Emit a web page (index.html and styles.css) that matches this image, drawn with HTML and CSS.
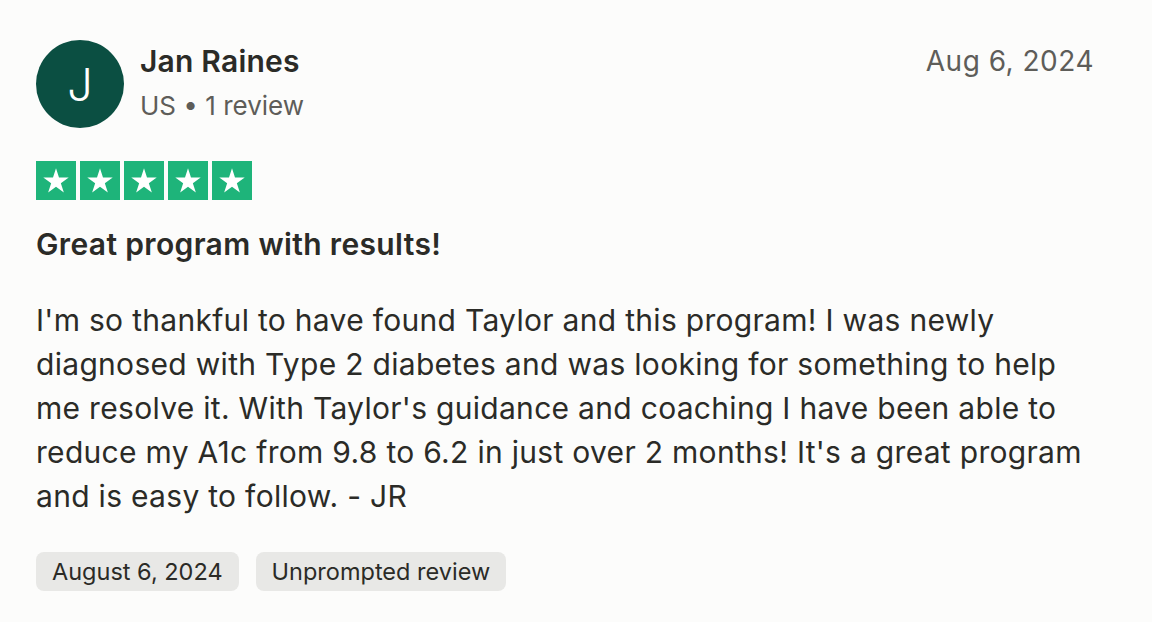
FILE: index.html
```html
<!DOCTYPE html>
<html lang="en">
<head>
<meta charset="utf-8">
<title>Review</title>
<link rel="stylesheet" href="styles.css">
</head>
<body>
<article class="review">
  <header class="review-head">
    <div class="consumer">
      <div class="avatar">J</div>
      <div class="consumer-info">
        <div class="name">Jan Raines</div>
        <div class="meta">US • 1 review</div>
      </div>
    </div>
    <time class="date">Aug 6, 2024</time>
  </header>
  <div class="stars" aria-label="Rated 5 out of 5">
    <span class="star"><svg viewBox="0 0 40 40"><path d="M20 7.5L23.07 16.97H33.03L24.97 22.82L28.05 32.28L20 26.43L11.95 32.28L15.03 22.82L6.97 16.97H16.93Z"/></svg></span>
    <span class="star"><svg viewBox="0 0 40 40"><path d="M20 7.5L23.07 16.97H33.03L24.97 22.82L28.05 32.28L20 26.43L11.95 32.28L15.03 22.82L6.97 16.97H16.93Z"/></svg></span>
    <span class="star"><svg viewBox="0 0 40 40"><path d="M20 7.5L23.07 16.97H33.03L24.97 22.82L28.05 32.28L20 26.43L11.95 32.28L15.03 22.82L6.97 16.97H16.93Z"/></svg></span>
    <span class="star"><svg viewBox="0 0 40 40"><path d="M20 7.5L23.07 16.97H33.03L24.97 22.82L28.05 32.28L20 26.43L11.95 32.28L15.03 22.82L6.97 16.97H16.93Z"/></svg></span>
    <span class="star"><svg viewBox="0 0 40 40"><path d="M20 7.5L23.07 16.97H33.03L24.97 22.82L28.05 32.28L20 26.43L11.95 32.28L15.03 22.82L6.97 16.97H16.93Z"/></svg></span>
  </div>
  <h2 class="title">Great program with results!</h2>
  <p class="text">I'm so thankful to have found Taylor and this program! I was newly diagnosed with Type 2 diabetes and was looking for something to help me resolve it. With Taylor's guidance and coaching I have been able to reduce my A1c from 9.8 to 6.2 in just over 2 months! It's a great program and is easy to follow. - JR</p>
  <div class="tags">
    <span class="tag">August 6, 2024</span>
    <span class="tag">Unprompted review</span>
  </div>
</article>
</body>
</html>
```
FILE: styles.css
```css
html, body {
  margin: 0;
  padding: 0;
  background: #fcfcfb;
}
body {
  font-family: Inter, "Noto Sans", sans-serif;
  color: #2b2b27;
}
.review {
  padding: 40px 58px 0 36px;
}
.review-head {
  display: flex;
  justify-content: space-between;
  align-items: flex-start;
}
.consumer {
  display: flex;
  align-items: center;
  gap: 16px;
}
.avatar {
  width: 88px;
  height: 88px;
  border-radius: 50%;
  background: #0b4f42;
  color: #fff;
  display: flex;
  align-items: center;
  justify-content: center;
  font-size: 45px;
  font-weight: 300;
  line-height: 1;
}
.consumer-info {
  display: flex;
  flex-direction: column;
  gap: 9px;
  margin-top: -4px;
}
.name {
  font-size: 30px;
  font-weight: 600;
  line-height: 38px;
  letter-spacing: 0.2px;
}
.meta {
  font-size: 26px;
  line-height: 34px;
  color: #5e5d59;
}
.date {
  font-size: 28px;
  line-height: 38px;
  color: #5e5d59;
  letter-spacing: 0.5px;
  margin-top: 2px;
}
.stars {
  display: flex;
  gap: 4px;
  margin-top: 33px;
}
.star {
  width: 40px;
  height: 39px;
  background: #1eb47a;
  display: flex;
}
.star svg {
  width: 40px;
  height: 39px;
  fill: #fff;
}
.title {
  margin: 24px 0 0;
  font-size: 30px;
  line-height: 40px;
  font-weight: 600;
  letter-spacing: 0.35px;
}
.text {
  margin: 34px 0 0;
  font-size: 30px;
  line-height: 44px;
  letter-spacing: 0.3px;
}
.tags {
  display: flex;
  gap: 17px;
  margin-top: 34px;
}
.tag {
  background: #e8e8e6;
  border-radius: 8px;
  padding: 0 16px;
  height: 39px;
  display: flex;
  align-items: center;
  font-size: 23.5px;
}
```
